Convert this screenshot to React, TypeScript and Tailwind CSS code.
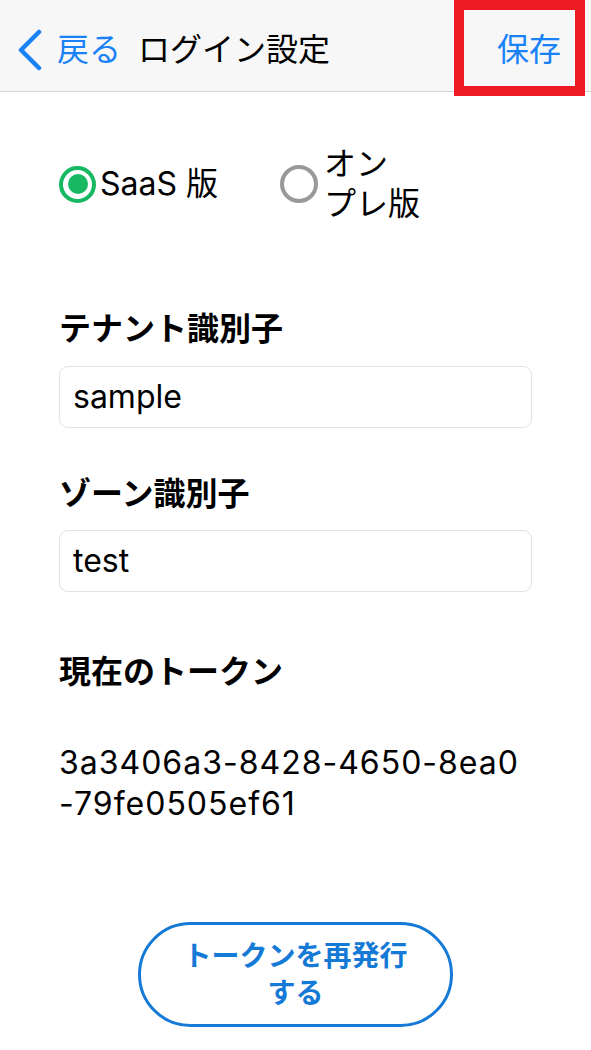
import React from "react";

const FONT = '"Inter", "Noto Sans CJK JP", sans-serif';

export default function App() {
  return (
    <div className="relative w-[591px] h-[1050px] bg-white overflow-hidden" style={{ fontFamily: FONT }}>
      {/* Header */}
      <div className="h-[92px] bg-[#f7f7f7] border-b border-[#d4d4d4] flex items-center pt-[8px]">
        <div className="flex items-center pl-[16px] text-[#1a82f7]">
          <svg width="27" height="42" viewBox="0 0 27 42">
            <path d="M23 3 L5 21 L23 39" fill="none" stroke="#1a82f7" strokeWidth="4.5" strokeLinecap="round" strokeLinejoin="round" />
          </svg>
          <span className="ml-[14px] text-[32px] leading-[40px]">戻る</span>
        </div>
        <span className="ml-[17px] text-[32px] leading-[40px] text-black">ログイン設定</span>
        <div className="flex-1" />
        <span className="mr-[30px] text-[32px] leading-[40px] text-[#1a82f7]">保存</span>
      </div>

      {/* red highlight */}
      <div className="absolute left-[454px] top-0 w-[131px] h-[96px] border-[10px] border-[#ed1c24]" />

      {/* Content */}
      <div className="px-[59px]">
        {/* Radios */}
        <div className="mt-[52px] flex items-center h-[80px]">
          <div className="flex items-center">
            <div className="w-[37px] h-[37px] rounded-full border-[4px] border-[#16b862] flex items-center justify-center">
              <div className="w-[20px] h-[20px] rounded-full bg-[#16b862]" />
            </div>
            <span className="ml-[4px] text-[32px] leading-[40px] text-black">SaaS 版</span>
          </div>
          <div className="flex items-center ml-[62px]">
            <div className="w-[38px] h-[38px] rounded-full border-[4px] border-[#999999]" />
            <div className="ml-[6px] text-[32px] leading-[40px] text-black">
              <div>オン</div>
              <div>プレ版</div>
            </div>
          </div>
        </div>

        {/* Tenant */}
        <div className="mt-[85px] text-[32px] leading-[40px] font-bold text-black">テナント識別子</div>
        <div className="mt-[17px] h-[62px] rounded-[9px] border border-[#e2e2e2] flex items-center pl-[13px] text-[32px] text-black">
          sample
        </div>

        {/* Zone */}
        <div className="mt-[46px] text-[32px] leading-[40px] font-bold text-black">ゾーン識別子</div>
        <div className="mt-[16px] h-[62px] rounded-[9px] border border-[#e2e2e2] flex items-center pl-[13px] text-[32px] text-black">
          test
        </div>

        {/* Token */}
        <div className="mt-[60px] text-[32px] leading-[40px] font-bold text-black">現在のトークン</div>
        <div className="mt-[50px] text-[32px] leading-[41px] tracking-[1px] text-black">
          <div>3a3406a3-8428-4650-8ea0</div>
          <div>-79fe0505ef61</div>
        </div>

        {/* Button */}
        <div className="mt-[98px] flex justify-center">
          <div className="w-[315px] h-[105px] rounded-full border-[3px] border-[#1579d6] flex flex-col items-center justify-center text-[#1579d6] font-bold text-[28px] leading-[37px]">
            <div>トークンを再発行</div>
            <div>する</div>
          </div>
        </div>
      </div>
    </div>
  );
}
